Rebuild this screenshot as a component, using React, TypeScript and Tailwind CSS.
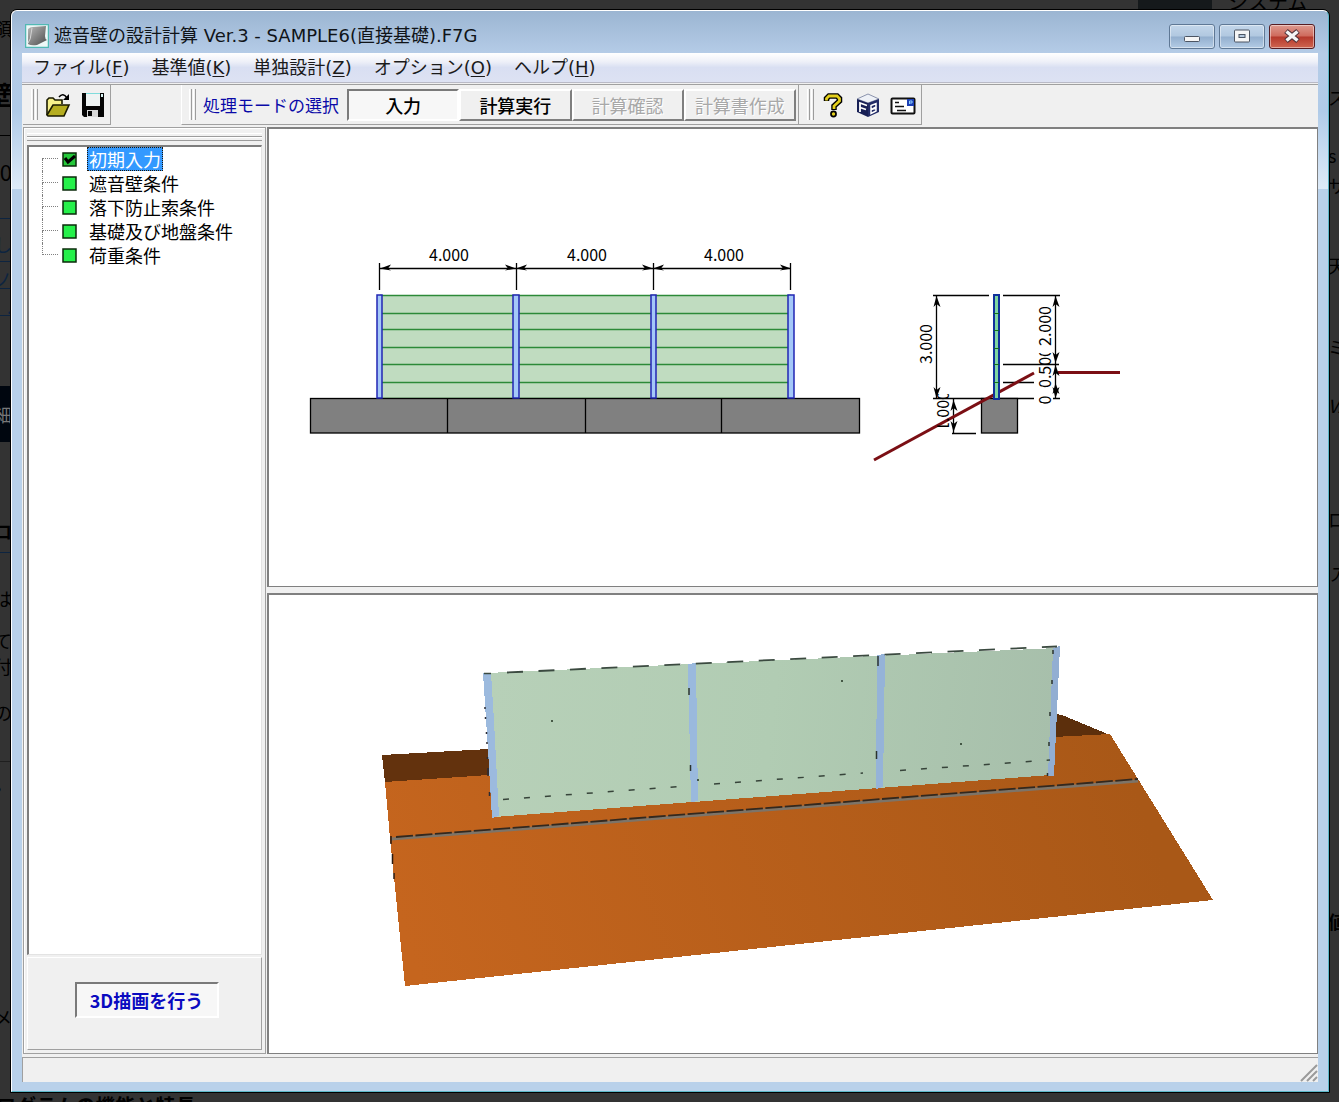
import { useState } from 'react'
import type { ReactNode } from 'react'

const MENUS = [
  { label: 'ファイル', key: 'F' },
  { label: '基準値', key: 'K' },
  { label: '単独設計', key: 'Z' },
  { label: 'オプション', key: 'O' },
  { label: 'ヘルプ', key: 'H' },
]

const MODES = [
  { label: '入力', enabled: true },
  { label: '計算実行', enabled: true },
  { label: '計算確認', enabled: false },
  { label: '計算書作成', enabled: false },
]

const STEPS = ['初期入力', '遮音壁条件', '落下防止索条件', '基礎及び地盤条件', '荷重条件']

function AppIcon() {
  return (
    <svg viewBox="0 0 24 24" className="size-6 shrink-0" aria-hidden="true">
      <defs>
        <linearGradient id="wall-icon" x1="0" y1="0" x2="1" y2="1">
          <stop offset="0" stopColor="#b9b9b9" />
          <stop offset="1" stopColor="#4c4c4c" />
        </linearGradient>
      </defs>
      <rect x="0.500" y="0.500" width="23" height="23" fill="#eef8f7" stroke="#52b9b4" strokeWidth="1.500" />
      <path d="M3 5 Q5 3 8 3 L21 2 L20 12 Q20 15 22 16 L12 21 Q6 22 3 20 Z" fill="url(#wall-icon)" />
      <path d="M3 19 Q6 15 6 10 L7 4" fill="none" stroke="#d5d5d5" />
    </svg>
  )
}

function OpenIcon() {
  return (
    <svg viewBox="0 0 26 26" className="size-[26px]" aria-hidden="true">
      <path d="M2 23 V8 L4 6 H8 L10 8 H17 V12" fill="#f6f08a" stroke="#1a1a00" strokeWidth="1.6" />
      <path d="M2 23 L8 13 H24 L19 24 H3 Z" fill="#b5ad20" stroke="#1a1a00" strokeWidth="1.6" />
      <path d="M14 5 Q18 0 22 6" fill="none" stroke="#000" strokeWidth="1.5" />
      <path d="M24 2 V8 H18 Z" fill="#000" />
    </svg>
  )
}

function SaveIcon() {
  return (
    <svg viewBox="0 0 24 26" className="h-[26px] w-6" aria-hidden="true">
      <path d="M1 1 H23 V25 H3 L1 23 Z" fill="#050505" />
      <rect x="5" y="1" width="14" height="13" fill="#eef3f3" />
      <path d="M5 1.500 H19" stroke="#7fdcdc" />
      <rect x="20" y="2" width="2" height="3" fill="#d9f5f5" />
      <rect x="6" y="18" width="11" height="7" fill="#d8d8d8" />
      <rect x="7" y="19" width="4" height="5" fill="#050505" />
    </svg>
  )
}

function HelpIcon() {
  return (
    <svg viewBox="0 0 20 26" className="h-[26px] w-5" aria-hidden="true">
      <path d="M3.500 9 V6.500 L6 4 H14 L16.500 6.500 V9 L11 14 V18" fill="none" stroke="#000" strokeWidth="5.500" />
      <circle cx="10.500" cy="22" r="3.400" fill="#000" />
      <path d="M3.500 8.500 V6.500 L6 4 H14 L16.500 6.500 V9 L11 14 V17" fill="none" stroke="#e3cf1c" strokeWidth="2.800" />
      <circle cx="10.500" cy="22" r="1.700" fill="#e3cf1c" />
    </svg>
  )
}

function CubeIcon() {
  return (
    <svg viewBox="0 0 26 26" className="size-[26px]" aria-hidden="true">
      <path d="M2 7 L13 2 L24 7 L13 11 Z" fill="#eef1f7" stroke="#8b93ad" />
      <path d="M2 7 L13 11 V25 L2 20 Z" fill="#171f55" />
      <path d="M24 7 L13 11 V25 L24 20 Z" fill="#222b66" />
      <path d="M12 13.500 L5 11 V20 M5 15.500 L11 17.500" fill="none" stroke="#fff" strokeWidth="1.800" />
      <path d="M16 13.500 V21.500 L21 19 V16 L16.500 17.500 L21 15 V11.500 Z" fill="none" stroke="#fff" strokeWidth="1.500" />
    </svg>
  )
}

function CardIcon() {
  return (
    <svg viewBox="0 0 26 26" className="size-[26px]" aria-hidden="true">
      <rect x="1.500" y="6.500" width="23" height="15" rx="1" fill="#fff" stroke="#111" strokeWidth="2" />
      <rect x="17" y="7" width="7" height="7" fill="#1c3fb5" />
      <path d="M19.500 12 V9 H22 V11 H20" fill="none" stroke="#8fd0ff" />
      <path d="M5 10.500 H9 M5 14.500 H14 M7 18.500 H16" stroke="#111" strokeWidth="1.600" />
    </svg>
  )
}

function StepMark({ checked }: { checked: boolean }) {
  return (
    <svg viewBox="0 0 15 15" className="size-[15px] shrink-0" aria-hidden="true">
      <rect x="1" y="1" width="13" height="13" fill={checked ? '#25c83a' : '#25f04a'} stroke="#0b2a0b" strokeWidth="1.500" />
      {checked && <path d="M3 6 L6 10 L13 4" fill="none" stroke="#000" strokeWidth="3" />}
    </svg>
  )
}

function Grip() {
  return (
    <span className="flex gap-px self-stretch py-1">
      <span className="w-[3px] border-r border-l border-r-[#9c9c9c] border-l-white" />
      <span className="w-[3px] border-r border-l border-r-[#9c9c9c] border-l-white" />
    </span>
  )
}

function CaptionButton({ label, close, children }: { label: string; close?: boolean; children: ReactNode }) {
  return (
    <button
      type="button"
      aria-label={label}
      className={`flex h-[25px] w-[46px] items-center justify-center rounded-[3px] border shadow-[inset_0_0_0_1px_rgba(255,255,255,0.45)] ${
        close
          ? 'border-[#561c22] bg-[linear-gradient(#dd9a8f_0%,#cf6a5c_48%,#b5382b_52%,#cf6550_100%)]'
          : 'border-[#5f7895] bg-[linear-gradient(#c3d6ea_0%,#b1c8e0_48%,#93afce_52%,#b3cbe5_100%)]'
      }`}
    >
      {children}
    </button>
  )
}

// arrow head with its tip on (x, y), pointing along the given direction
function Arrow({ x, y, dir }: { x: number; y: number; dir: 'l' | 'r' | 'u' | 'd' }) {
  const points = {
    l: `${x},${y} ${x + 11},${y - 4} ${x + 8},${y} ${x + 11},${y + 2}`,
    r: `${x},${y} ${x - 11},${y - 4} ${x - 8},${y} ${x - 11},${y + 2}`,
    u: `${x},${y} ${x - 3},${y + 11} ${x},${y + 8} ${x + 4},${y + 11}`,
    d: `${x},${y} ${x - 3},${y - 11} ${x},${y - 8} ${x + 4},${y - 11}`,
  }
  return <polygon points={points[dir]} fill="#000" />
}

function SideText({ x, y, children }: { x: number; y: number; children: string }) {
  return (
    <text textAnchor="middle" transform={`translate(${x} ${y}) rotate(-90)`}>
      {children}
    </text>
  )
}

function SectionDrawing() {
  const posts = [
    { x: 377, w: 5 },
    { x: 513, w: 6 },
    { x: 651, w: 5 },
    { x: 788, w: 6 },
  ]
  const spans = [
    { from: 380, to: 516, text: 449 },
    { from: 516, to: 653, text: 587 },
    { from: 653, to: 791, text: 724 },
  ]
  return (
    <svg
      viewBox="269 129 1048 457"
      role="img"
      aria-label="正面図・側面図"
      className="block h-auto w-full font-['Noto_Sans_CJK_JP',sans-serif] text-[16px]"
    >
      <defs>
        <clipPath id="clip-mid">
          <rect x="1030" y="353" width="24" height="60" />
        </clipPath>
        <clipPath id="clip-base">
          <rect x="930" y="394" width="24" height="33" />
        </clipPath>
      </defs>

      {/* front view */}
      <g shapeRendering="crispEdges">
        <rect x="380" y="295" width="411" height="104" fill="#c0dcc0" />
      </g>
      {[295, 313, 329, 347, 364, 382, 398].map((y) => (
        <path key={y} d={`M380 ${y + 0.5} H791`} stroke="#2c8a38" strokeWidth="1.500" />
      ))}
      <rect x="310.500" y="398.500" width="549" height="34.500" fill="#808080" stroke="#000" strokeWidth="1.300" />
      <path d="M447.500 399 V433 M585.500 399 V433 M721.500 399 V433" stroke="#000" strokeWidth="1.300" />
      <g>
        {posts.map((p) => (
          <rect key={p.x} x={p.x} y="295" width={p.w} height="103" fill="#a4c8f8" stroke="#2226b4" strokeWidth="1.500" />
        ))}
        <path d="M379.500 263 V290 M516.500 263 V290 M653.500 263 V290 M790.500 263 V290 M380 268.500 H791" stroke="#000" strokeWidth="1.300" />
      </g>
      {spans.map((s) => (
        <g key={s.from}>
          <Arrow x={s.from} y={268.5} dir="l" />
          <Arrow x={s.to} y={268.5} dir="r" />
          <text x={s.text} y="261" textAnchor="middle">
            4.000
          </text>
        </g>
      ))}

      {/* side view */}
      <g stroke="#000" strokeWidth="1.300">
        <path d="M933 295.500 H989 M1003 295.500 H1060 M1003 364.500 H1059 M1003 382.500 H1034 M933 398.500 H1034 M1053 398.500 H1060" />
        <path d="M936.500 295 V398 M1055.500 295 V398 M953.500 399 V433 M952 433.500 H976" />
        <rect x="981.500" y="398.500" width="36" height="34.500" fill="#808080" />
      </g>
      <path d="M874 460 L1034 373" stroke="#7b0f14" strokeWidth="3" />
      <path d="M1058 372.500 H1120" stroke="#7b0f14" strokeWidth="3" />
      <g shapeRendering="crispEdges">
        <rect x="994" y="295" width="5" height="104" fill="#7fd6a0" stroke="#10309a" strokeWidth="2" />
        <path d="M994 313 H999 M994 330 H999 M994 348 H999 M994 364 H999 M994 382 H999" stroke="#14701f" />
      </g>
      <Arrow x={936.5} y={296} dir="u" />
      <Arrow x={936.5} y={398} dir="d" />
      <Arrow x={1055.5} y={296} dir="u" />
      <Arrow x={1055.5} y={363} dir="d" />
      <Arrow x={1055.5} y={365} dir="u" />
      <Arrow x={1055.5} y={383} dir="u" />
      <Arrow x={1055.5} y={398} dir="d" />
      <Arrow x={953.5} y={400} dir="u" />
      <Arrow x={953.5} y={432} dir="d" />
      <SideText x={932} y={344}>3.000</SideText>
      <SideText x={1051} y={326}>2.000</SideText>
      <g clipPath="url(#clip-mid)">
        <SideText x={1051} y={368}>0.500</SideText>
      </g>
      <SideText x={1051} y={400}>0</SideText>
      <g clipPath="url(#clip-base)">
        <SideText x={949} y={411}>1.000</SideText>
      </g>
    </svg>
  )
}

function ModelDrawing() {
  return (
    <svg viewBox="269 595 1048 458" role="img" aria-label="3D表示" className="block h-auto w-full">
      <defs>
        <linearGradient id="soil" gradientUnits="userSpaceOnUse" x1="420" y1="980" x2="1120" y2="740">
          <stop offset="0" stopColor="#c5651e" />
          <stop offset="1" stopColor="#a95817" />
        </linearGradient>
        <linearGradient id="panel" gradientUnits="userSpaceOnUse" x1="490" y1="700" x2="1050" y2="760">
          <stop offset="0" stopColor="#b7d0b8" />
          <stop offset="0.500" stopColor="#b1ccb3" />
          <stop offset="1" stopColor="#a7bfab" />
        </linearGradient>
      </defs>
      <g shapeRendering="crispEdges">
        <polygon points="382,755 489,749 489,776 385,782" fill="#63320d" />
        <polygon points="1056,714 1062,715 1110,735 1054,738" fill="#5c2f0c" />
        <polygon points="385,782 1054,737 1110,734 1138,779 1213,900 405,986 390,838" fill="url(#soil)" />
      </g>

      {/* step of the slope */}
      <path d="M391 839 L1138 781" stroke="#7d7468" strokeWidth="3" />
      <path d="M396 837 L1138 779" stroke="#33281e" strokeWidth="1.800" strokeDasharray="17 2.500" />
      <path d="M391 836 V844 M392.500 854 V864 M394 873 V879" stroke="#2a1a10" strokeWidth="1.500" />

      <g shapeRendering="crispEdges">
        <polygon points="487,673 1057,648 1051,775 494,817" fill="url(#panel)" />
        <polygon points="483,673 491,673 494,721 499,816 492,818 488,750" fill="#9cbade" />
        <polygon points="688,664 696,663 698,801 691,802" fill="#9ab9dd" />
        <polygon points="877,655 885,654 883,787 876,789" fill="#95b3d8" />
        <polygon points="1053,648 1060,646 1054,776 1048,776" fill="#92aed2" />
      </g>

      <path d="M484 673.500 H491" stroke="#3b4a40" strokeWidth="1.500" />
      <path d="M507 672.500 L1057 646.500" stroke="#3b4a40" strokeWidth="1.800" strokeDasharray="16 15.500" />
      <path d="M503 799.500 L686 786 M714 784 L863 773 M900 770.500 L1050 760" stroke="#37443a" strokeWidth="1.500" strokeDasharray="6 15" />
      <path d="M689 688 V695 M690.500 765 V771 M878 656 V666 M876.500 751 V759 M1053 650 V654 M1052 680 V684 M1050 712 V716 M1049 742 V746 M1047.500 773 V776" stroke="#2b332e" strokeWidth="1.500" />
      <path d="M485 707 v2 M485.500 717 v2 M486.500 732 v2 M487 742 v2 M487.500 757 v2 M488 768 v8 M489.500 792 v4" stroke="#2b2b33" strokeWidth="1.500" />
      <path d="M551 721 h2 M841 681 h2 M960 744 h2 M697 780 h2" stroke="#223322" strokeWidth="1.500" />
    </svg>
  )
}

// the dimmed page that stays visible around the window
function Backdrop() {
  return (
    <div aria-hidden="true" className="absolute inset-0 overflow-hidden bg-[#333] text-black">
      <div className="absolute inset-y-0 left-0 flex w-3 flex-col items-end overflow-hidden text-[18px] leading-[18px]">
        <span className="mt-[19px]">領</span>
        <span className="mt-11 text-[26px] leading-[26px] font-bold">壁</span>
        <span className="mt-7 h-px w-full bg-black" />
        <span className="mt-6 text-[22px] leading-[22px]">30</span>
        <span className="mt-9 h-px w-full bg-[#0d2440]" />
        <span className="mt-4 text-[#0d2440]">し</span>
        <span className="mt-2 h-px w-full bg-[#0d2440]" />
        <span className="mt-2 text-[#0d2440]">ノ</span>
        <span className="h-px w-full bg-[#0d2440]" />
        <span className="mt-2 text-[#0d2440]">.</span>
        <span className="h-px w-full bg-[#0d2440]" />
        <span className="mt-[70px] flex h-14 w-full items-center justify-end bg-[#00060f] text-[#777]">細</span>
        <span className="mt-20 font-bold">ロ</span>
        <span className="mt-3 h-px w-full bg-[#0d2440]" />
        <span className="mt-9">は</span>
        <span className="mt-6">て</span>
        <span className="mt-2">付</span>
        <span className="mt-7">の</span>
        <span className="mt-10 h-px w-full bg-[#1f1f1f]" />
        <span className="mt-3 font-bold">。</span>
        <span className="mt-[216px]">メ</span>
      </div>
      <div className="absolute inset-y-0 right-0 flex w-[11px] flex-col overflow-hidden text-[18px] leading-[18px]">
        <span className="mt-[88px]">ス</span>
        <span className="mt-10">s</span>
        <span className="mt-3">サ</span>
        <span className="mt-[62px]">天</span>
        <span className="mt-16">ミ</span>
        <span className="mt-10 italic">VA</span>
        <span className="mt-24">ロ</span>
        <span className="mt-9 italic">ア</span>
        <span className="mt-[330px] font-bold">値</span>
      </div>
      <div className="absolute top-[-8px] right-0 flex h-[18px] w-[201px] gap-4">
        <span className="w-[74px] bg-[#15191b]" />
        <span className="text-[20px] leading-[20px]">システム</span>
      </div>
      <p className="absolute bottom-[-14px] left-[-4px] text-[20px] leading-[20px] font-bold whitespace-nowrap">
        ログラムの機能と特長
      </p>
    </div>
  )
}

export default function App() {
  const [mode, setMode] = useState('入力')
  const [step, setStep] = useState('初期入力')

  return (
    <div className="relative flex min-h-screen flex-col pt-[9px] pr-[9px] pb-[9px] pl-[10px] font-['Noto_Sans_CJK_JP',sans-serif]">
      <Backdrop />
      <div className="relative flex flex-1 flex-col rounded-t-[7px] border border-black">
        <div className="flex flex-1 flex-col rounded-t-md border border-t-white border-r-[#5cb7c8] border-b-[#5cb7c8] border-l-white bg-[linear-gradient(to_bottom,#9bb5d2_0px,#b5cce7_43px,#b0cbe8_100px,#deebf8_178px,#b9d1ea_178px)] px-[10px] pb-[9px]">
          <header className="flex h-[42px] items-center gap-[5px] pt-2 pr-[3px] pl-[3px]">
            <AppIcon />
            <h1 className="flex-1 font-['DejaVu_Sans','Noto_Sans_CJK_JP',sans-serif] text-[18px] leading-6 text-[#101418]">
              遮音壁の設計計算 Ver.3 - SAMPLE6(直接基礎).F7G
            </h1>
            <div className="flex gap-1">
              <CaptionButton label="最小化">
                <svg viewBox="0 0 18 18" className="size-[18px]">
                  <rect x="1.500" y="9.500" width="15" height="5" rx="1" fill="#f5f5f5" stroke="#4c5563" />
                </svg>
              </CaptionButton>
              <CaptionButton label="最大化">
                <svg viewBox="0 0 18 18" className="size-[18px]">
                  <rect x="1.500" y="3" width="15" height="12" rx="1" fill="#f5f5f5" stroke="#4c5563" />
                  <rect x="6" y="7.500" width="6" height="3" fill="#b5c8dd" stroke="#4c5563" />
                </svg>
              </CaptionButton>
              <CaptionButton label="閉じる" close>
                <svg viewBox="0 0 18 18" className="size-[18px]">
                  <path d="M3 4 L15 14 M15 4 L3 14" stroke="#4a3038" strokeWidth="5.500" />
                  <path d="M3.500 4.500 L14.500 13.500 M14.500 4.500 L3.500 13.500" stroke="#f5f5f5" strokeWidth="3.500" />
                </svg>
              </CaptionButton>
            </div>
          </header>

          <div className="flex flex-1 flex-col bg-[#f0f0f0]">
            <nav className="flex h-[30px] items-center gap-[22px] border-b border-[#b9bac6] bg-[linear-gradient(#ffffff_0%,#eef0f8_30%,#d9dff2_50%,#dde2f3_100%)] pl-[11px] font-['DejaVu_Sans','Noto_Sans_CJK_JP',sans-serif] text-[18px] leading-6 text-[#1a1a1a]">
              {MENUS.map((m) => (
                <button key={m.key} type="button">
                  {m.label}(<span className="underline underline-offset-2">{m.key}</span>)
                </button>
              ))}
            </nav>

            <div className="mt-px flex h-[43px] items-stretch border-t border-[#a0a0a0] pb-[2px] pl-px">
              <div className="flex w-[88px] items-center border-r border-b border-[#a0a0a0] pl-2">
                <Grip />
                <button type="button" aria-label="開く" className="ml-[7px]">
                  <OpenIcon />
                </button>
                <button type="button" aria-label="保存" className="ml-[10px]">
                  <SaveIcon />
                </button>
              </div>
              <div className="ml-[70px] flex w-[617px] items-center border-b border-l border-b-[#a0a0a0] border-l-white pl-[7px]">
                <Grip />
                <span className="ml-[7px] w-36 text-[17px] leading-6 whitespace-nowrap text-[#0a0aa8]">処理モードの選択</span>
                <div className="flex flex-1 pr-[2px]">
                  {MODES.map((m) => (
                    <button
                      key={m.label}
                      type="button"
                      disabled={!m.enabled}
                      onClick={() => setMode(m.label)}
                      className={`h-8 flex-1 border-2 text-[18px] leading-6 ${
                        mode === m.label
                          ? 'border-t-[#7a7a7a] border-r-white border-b-white border-l-[#7a7a7a] bg-[#f7f7f7]'
                          : 'border-t-white border-r-[#7f7f7f] border-b-[#7f7f7f] border-l-white bg-[#f0f0f0]'
                      } ${m.enabled ? 'font-medium text-black' : 'text-[#a8a8a8] [text-shadow:1px_1px_0_#fff]'}`}
                    >
                      {m.label}
                    </button>
                  ))}
                </div>
              </div>
              <div className="flex w-[124px] items-center border-r border-b border-l border-[#a0a0a0] pl-2">
                <Grip />
                <button type="button" aria-label="ヘルプ" className="ml-[9px]">
                  <HelpIcon />
                </button>
                <button type="button" aria-label="製品情報" className="ml-3">
                  <CubeIcon />
                </button>
                <button type="button" aria-label="問い合わせ" className="ml-[9px]">
                  <CardIcon />
                </button>
              </div>
            </div>

            <main className="flex flex-1">
              <aside className="ml-px flex w-[243px] shrink-0 flex-col border border-[#a0a0a0] p-[3px] pt-[5px] shadow-[inset_1px_1px_0_#fff]">
                <div className="h-1 border-t border-b border-t-white border-b-[#9c9c9c]" />
                <div className="mb-1 h-1 border-t border-b border-t-white border-b-[#9c9c9c]" />
                <ul className="flex-1 border-t-2 border-r border-b border-l-2 border-t-[#7d7d7d] border-r-[#e3e3e3] border-b-[#e3e3e3] border-l-[#7d7d7d] bg-white pl-[13px]">
                  {STEPS.map((s, i) => (
                    <li key={s} className="flex h-6 items-center">
                      <span className="mr-1 flex h-6 w-4 flex-col">
                        <span className={`h-3 border-b border-dotted border-[#808080] ${i > 0 ? 'border-l' : ''}`} />
                        <span className={`h-3 border-dotted border-[#808080] ${i < STEPS.length - 1 ? 'border-l' : ''}`} />
                      </span>
                      <StepMark checked={step === s} />
                      <button
                        type="button"
                        onClick={() => setStep(s)}
                        className={`ml-[10px] flex h-6 items-center border border-dotted px-px text-[18px] leading-5 ${
                          step === s ? 'border-[#1d1408] bg-[#3399ff] text-white' : 'border-transparent text-black'
                        }`}
                      >
                        {s}
                      </button>
                    </li>
                  ))}
                </ul>
                <div className="mt-[2px] flex h-[93px] items-center justify-center border border-t-white border-r-[#a0a0a0] border-b-[#a0a0a0] border-l-white pb-2 pl-1">
                  <button
                    type="button"
                    className="h-9 w-36 border-2 border-t-[#7a7a7a] border-r-white border-b-white border-l-[#7a7a7a] bg-[#f7f7f7] text-[18px] leading-6 font-bold text-[#0a0ac0]"
                  >
                    3D描画を行う
                  </button>
                </div>
              </aside>
              <div className="ml-px flex min-w-0 flex-1 flex-col gap-[6px]">
                <section className="flex-1 border-t-2 border-r border-b border-l-2 border-[#808080] bg-white">
                  <SectionDrawing />
                </section>
                <section className="flex-1 border-t-2 border-r border-b border-l-2 border-[#808080] bg-white">
                  <ModelDrawing />
                </section>
              </div>
            </main>

            <footer className="mt-[3px] flex h-[25px] items-end justify-end border-t border-l border-[#a0a0a0]">
              <svg viewBox="0 0 18 18" className="size-[18px]" aria-hidden="true">
                <path d="M1 17 L17 1 M7 17 L17 7 M13 17 L17 13" stroke="#9a9a9a" strokeWidth="2" />
              </svg>
            </footer>
          </div>
        </div>
      </div>
    </div>
  )
}
